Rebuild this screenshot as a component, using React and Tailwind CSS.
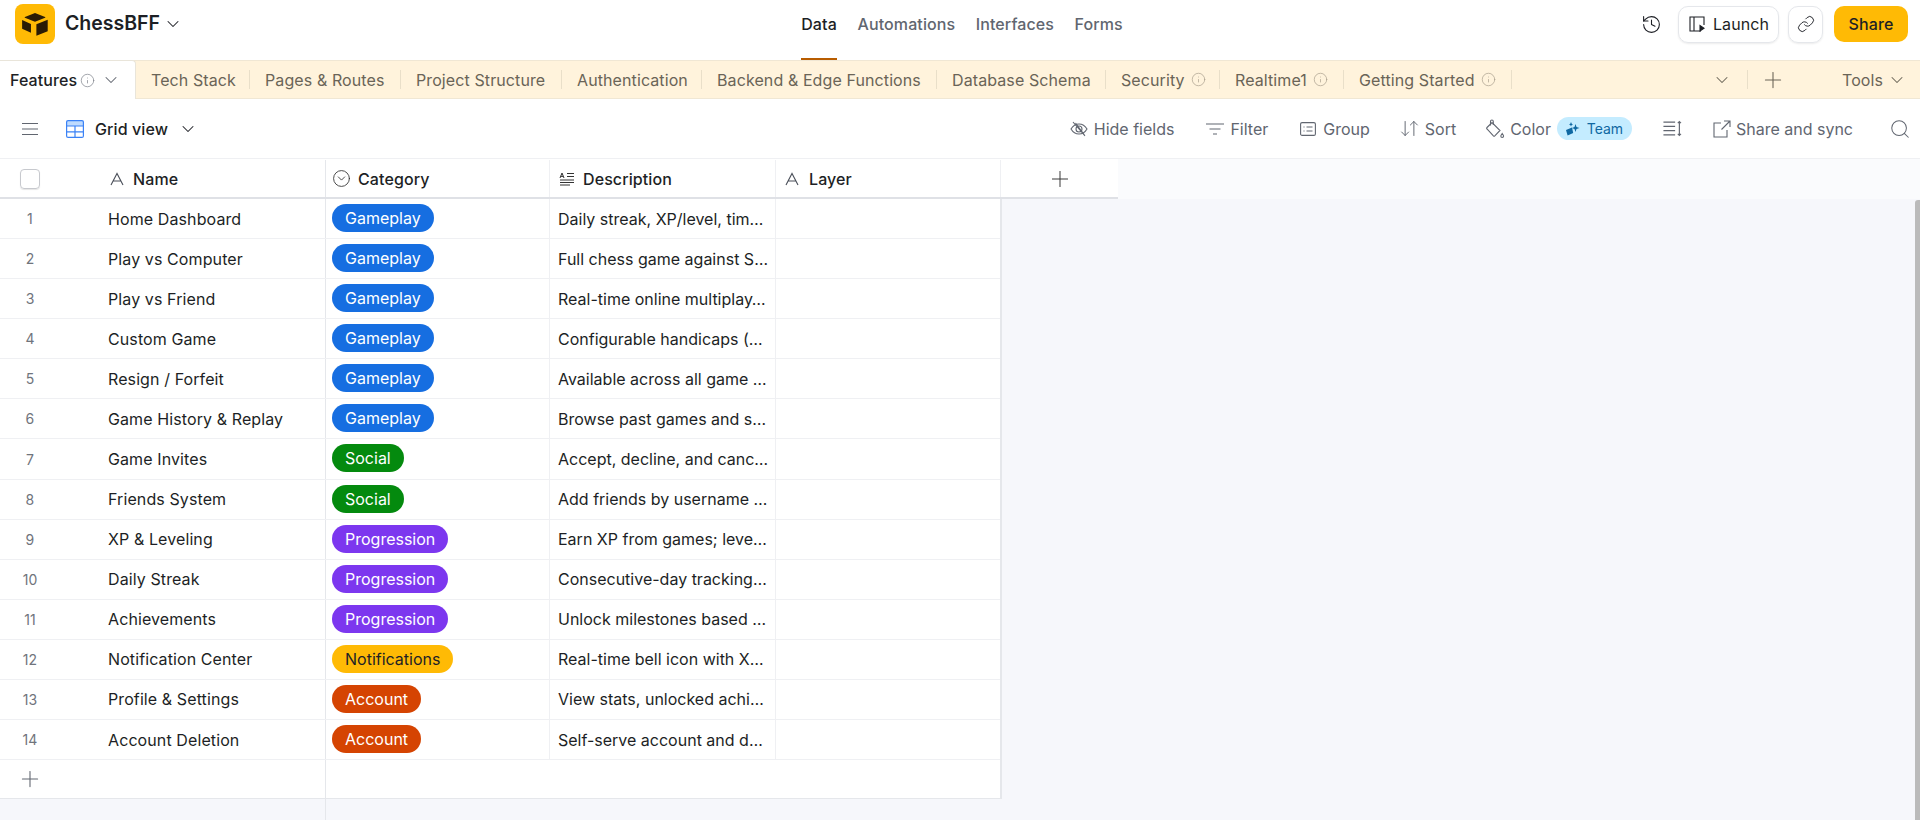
import React from "react";
import { ChevronDown, Info, Plus, Search, History, Link, CircleChevronDown, ArrowDownUp } from "lucide-react";

const AGlyph = ({ className = "" }) => (
  <svg viewBox="0 0 14 14" className={className} fill="none" stroke="currentColor" strokeWidth="1.1">
    <path d="M1 13 7 1.5 13 13M3.4 9h7.2" />
  </svg>
);
const LongText = ({ className = "" }) => (
  <svg viewBox="0 0 16 14" className={className} fill="none" stroke="currentColor" strokeWidth="1">
    <path d="M1 6 3 1l2 5M1.7 4.4h2.6M8 1.5h7M8 4.5h7M1 8h14M1 10.5h14M1 13h10" />
  </svg>
);
const Logo = () => (
  <div className="flex h-10 w-10 items-center justify-center rounded-lg bg-[#ffba05]">
    <svg viewBox="0 0 28 25" className="h-[23px] w-[28px]">
      <path d="M14 0 3 4.3c-.4.2-.4.7 0 .9l11 4.3 11-4.3c.4-.2.4-.7 0-.9z" fill="#2a1b05" />
      <path d="M0 7.6v9.4l9.6 4.4V12zM15.5 12.3v12.5l12.3-5V7.4z" fill="#2a1b05" />
    </svg>
  </div>
);
const TabInfo = () => <Info className="h-[15px] w-[15px] text-[#a89e8c]" strokeWidth={1.1} />;
const Sep = () => <div className="h-[19px] w-px bg-[#e9dfc9]" />;

const tabs = [
  { n: "Tech Stack", w: "w-[114px]" },
  { n: "Pages & Routes", w: "w-[151px]" },
  { n: "Project Structure", w: "w-[161px]" },
  { n: "Authentication", w: "w-[140px]" },
  { n: "Backend & Edge Functions", w: "w-[235px]" },
  { n: "Database Schema", w: "w-[169px]" },
  { n: "Security", i: true, w: "w-[114px]" },
  { n: "Realtime1", i: true, w: "w-[124px]" },
  { n: "Getting Started", i: true, w: "w-[168px]" },
];

const cats = {
  Gameplay: "bg-[#166ee1] text-white",
  Social: "bg-[#048a0e] text-white",
  Progression: "bg-[#7c37ef] text-white",
  Notifications: "bg-[#ffba05] text-[#1d1f25]",
  Account: "bg-[#d54402] text-white",
};
const rows = [
  ["Home Dashboard", "Gameplay", "Daily streak, XP/level, tim…"],
  ["Play vs Computer", "Gameplay", "Full chess game against S…"],
  ["Play vs Friend", "Gameplay", "Real-time online multiplay…"],
  ["Custom Game", "Gameplay", "Configurable handicaps (…"],
  ["Resign / Forfeit", "Gameplay", "Available across all game …"],
  ["Game History & Replay", "Gameplay", "Browse past games and s…"],
  ["Game Invites", "Social", "Accept, decline, and canc…"],
  ["Friends System", "Social", "Add friends by username …"],
  ["XP & Leveling", "Progression", "Earn XP from games; leve…"],
  ["Daily Streak", "Progression", "Consecutive-day tracking…"],
  ["Achievements", "Progression", "Unlock milestones based …"],
  ["Notification Center", "Notifications", "Real-time bell icon with X…"],
  ["Profile & Settings", "Account", "View stats, unlocked achi…"],
  ["Account Deletion", "Account", "Self-serve account and d…"],
];

const ToolItem = ({ icon, label, className = "" }) => (
  <div className={`flex items-center text-[#616670] ${className}`}>
    {icon}
    <span>{label}</span>
  </div>
);

export default function App() {
  return (
    <div className="flex h-[820px] w-[1920px] flex-col overflow-hidden bg-white font-['Inter',sans-serif] text-[16px] tracking-[0.1px] text-[#1d1f25]">
      {/* top bar */}
      <div className="flex h-[60px] shrink-0 items-center pb-3 pl-[15px]">
        <Logo />
        <span className="ml-[10px] text-[19.5px] font-semibold tracking-normal">ChessBFF</span>
        <ChevronDown className="ml-[3px] h-[20px] w-[20px]" strokeWidth={1.25} />
        <div className="ml-[618px] flex h-[48px] items-center gap-[20.5px] font-[450] text-[#616670]">
          <div className="relative flex h-full w-[36px] items-center justify-center text-[#1d1f25]">
            Data
            <div className="absolute bottom-[-12px] left-0 h-[2px] w-full bg-[#b85c00]" />
          </div>
          <span>Automations</span>
          <span>Interfaces</span>
          <span>Forms</span>
        </div>
        <div className="ml-auto flex items-center pr-[12px]">
          <History className="mr-[16px] h-[21px] w-[21px]" strokeWidth={1.25} />
          <div className="flex h-[37px] w-[101px] items-center justify-center gap-[7px] rounded-[10px] border border-[#e5e7eb] shadow-[0_1px_2px_rgba(0,0,0,0.08)]">
            <svg viewBox="0 0 18 18" className="h-[18px] w-[18px]" fill="none" stroke="currentColor" strokeWidth="1.1">
              <path d="M13 16H2V2h14v8M6 2v14" />
              <path d="M12 10.5v5.5l4-2.75z" fill="currentColor" />
            </svg>
            <span>Launch</span>
          </div>
          <div className="ml-[9px] flex h-[37px] w-[35px] items-center justify-center rounded-[10px] border border-[#e5e7eb] shadow-[0_1px_2px_rgba(0,0,0,0.08)]">
            <Link className="h-[18px] w-[18px]" strokeWidth={1.25} />
          </div>
          <div className="ml-[11px] flex h-[36px] w-[74px] items-center justify-center rounded-[10px] bg-[#ffba05] font-[450]">Share</div>
        </div>
      </div>

      {/* tab band */}
      <div className="flex h-[39px] shrink-0 items-center border-y border-[#f0e7d4] bg-[#fff3dc] text-[#6a6457]">
        <div className="-my-px flex h-[39px] w-[136px] items-center rounded-tr-[4px] border-r border-t border-[#e9e5da] bg-white pl-[10px] font-[450] text-[#1d1f25]">
          <span>Features</span>
          <Info className="ml-[3px] h-[15px] w-[15px] text-[#7b7f87]" strokeWidth={1.1} />
          <ChevronDown className="ml-[6px] h-[20px] w-[20px] text-[#616670]" strokeWidth={1.25} />
        </div>
        <div className="flex items-center">
          {tabs.map((t) => (
            <div key={t.n} className={`flex items-center justify-between pl-[15px] ${t.w}`}>
              <div className="flex items-center gap-[6px]">
                <span>{t.n}</span>
                {t.i && <TabInfo />}
              </div>
              <Sep />
            </div>
          ))}
        </div>
        <ChevronDown className="ml-[200px] h-[20px] w-[20px]" strokeWidth={1.25} />
        <div className="ml-[15px]"><Sep /></div>
        <Plus className="ml-[12px] h-[26px] w-[26px]" strokeWidth={1} />
        <span className="ml-[56px]">Tools</span>
        <ChevronDown className="ml-[4px] h-[20px] w-[20px]" strokeWidth={1.25} />
      </div>

      {/* toolbar */}
      <div className="flex h-[60px] shrink-0 items-center border-b border-[#eff0f3] pl-[22px] pr-[9px] tracking-normal text-[#616670]">
        <svg viewBox="0 0 16 14" className="h-[14px] w-[16px]" fill="none" stroke="currentColor" strokeWidth="1.2"><path d="M0 1.5h16M0 7h16M0 12.5h16" /></svg>
        <svg viewBox="0 0 18 18" className="ml-[28px] h-[18px] w-[18px]" fill="none">
          <rect x=".6" y=".6" width="16.8" height="5.4" fill="#bfdbfe" />
          <rect x=".6" y=".6" width="16.8" height="16.8" rx="1.5" stroke="#3b82f6" strokeWidth="1.2" />
          <path d="M.6 6h16.8M.6 11.8h16.8M9 6v11.4" stroke="#3b82f6" strokeWidth="1.2" />
        </svg>
        <span className="ml-[11px] font-[450] tracking-[0.1px] text-[#1d1f25]">Grid view</span>
        <ChevronDown className="ml-[10px] h-[20px] w-[20px] text-[#1d1f25]" strokeWidth={1.25} />
        <div className="ml-auto flex items-center">
          <ToolItem label="Hide fields" className="gap-[6px]" icon={
            <svg viewBox="0 0 18 18" className="h-[18px] w-[18px]" fill="none" stroke="currentColor" strokeWidth="1.1">
              <path d="M1 9s3-5 8-5 8 5 8 5-3 5-8 5-8-5-8-5z" /><circle cx="9" cy="9" r="3" /><path d="M3 2l12 14M5.5 3 14.5 15" />
            </svg>} />
          <ToolItem label="Filter" className="ml-[31px] gap-[5px]" icon={
            <svg viewBox="0 0 20 14" className="h-[14px] w-[20px]" fill="none" stroke="currentColor" strokeWidth="1.2"><path d="M1 2h18M4.5 7h11M8 12h4" /></svg>} />
          <ToolItem label="Group" className="ml-[32px] gap-[7px]" icon={
            <svg viewBox="0 0 16 16" className="h-[16px] w-[16px]" fill="none" stroke="currentColor" strokeWidth="1.1"><rect x=".6" y="1.6" width="14.8" height="12.8" rx="1.5" /><path d="M3.5 6h1M6.5 6h6M3.5 10h1M6.5 10h6" /></svg>} />
          <ToolItem label="Sort" className="ml-[29px] gap-[5px]" icon={<ArrowDownUp className="h-[21px] w-[21px]" strokeWidth={1.1} />} />
          <ToolItem label="Color" className="ml-[29px] gap-[5px]" icon={
            <svg viewBox="0 0 20 20" className="h-[20px] w-[20px]" fill="none" stroke="currentColor" strokeWidth="1.1">
              <path d="M2 8.5 7 3.5l8 8-5.2 5.4a1 1 0 0 1-1.4 0L2 10a1 1 0 0 1 0-1.5z" />
              <path d="M5.5 6.5V2.4a1.4 1.4 0 0 1 2.8 0V6" />
              <path d="M17.2 14.5c.9 1.2 1.4 1.9 1.4 2.5a1.4 1.4 0 0 1-2.8 0c0-.6.5-1.3 1.4-2.5z" />
            </svg>} />
          <div className="ml-[6px] flex h-[23px] w-[75px] items-center justify-center gap-[7px] rounded-full bg-[#c4ecff] text-[14px] text-[#0f68a2]">
            <svg viewBox="0 0 14 14" className="h-[14px] w-[14px]" fill="#0f68a2"><path d="M0 8l6-2.4 1.2 5.4-5.6 2.4zM8.5 5l1-3 1 3 3 .9-3 1-1 3-1-3-2.5-1zM5 0l.7 1.7L7 2.4l-1.3.6L5 4.6 4.3 3 3 2.4l1.3-.7z" /></svg>
            <span>Team</span>
          </div>
          <svg viewBox="0 0 18 16" className="ml-[31px] h-[17px] w-[20px]" fill="none" stroke="currentColor" strokeWidth="1.1"><path d="M0 2h11M0 6h11M0 10h11M0 14h11M15 1.5v13M13.5 3 15 1.5 16.5 3M13.5 13l1.5 1.5 1.5-1.5" /></svg>
          <ToolItem label="Share and sync" className="ml-[30px] gap-[5px]" icon={
            <svg viewBox="0 0 18 18" className="h-[18px] w-[18px]" fill="none" stroke="currentColor" strokeWidth="1.1"><path d="M8 3H1v14h13v-7M11 1h6v6M17 1 8.5 9.5" /></svg>} />
          <Search className="ml-[36px] h-[22px] w-[22px]" strokeWidth={1.1} />
        </div>
      </div>

      {/* grid */}
      <div className="relative flex min-h-0 flex-1 flex-col bg-[#f6f7fb]">
        {/* header */}
        <div className="flex h-[40px] shrink-0 bg-[#fafbfd]">
          <div className="flex h-full w-[1118px] border-b-2 border-[#dfe1e6] bg-white pt-[1px] font-[450]">
            <div className="flex w-[326px] items-center border-r border-[#e5e7eb]">
              <div className="ml-[20px] h-[20px] w-[20px] rounded-[4px] border border-[#c7c9ce] shadow-[0_1px_1px_rgba(0,0,0,0.1)]" />
              <AGlyph className="ml-[70px] h-[14px] w-[14px] text-[#4a4f59]" />
              <span className="ml-[9px]">Name</span>
            </div>
            <div className="flex w-[224px] items-center gap-[7px] border-r border-[#eff0f3] pl-[6px]">
              <CircleChevronDown className="h-[19px] w-[19px] text-[#333]" strokeWidth={1.1} />
              <span>Category</span>
            </div>
            <div className="flex w-[226px] items-center gap-[8px] border-r border-[#eff0f3] pl-[9px]">
              <LongText className="h-[14px] w-[16px] text-[#333]" />
              <span>Description</span>
            </div>
            <div className="flex w-[225px] items-center gap-[10px] border-r border-[#eff0f3] pl-[9px]">
              <AGlyph className="h-[14px] w-[14px] text-[#4a4f59]" />
              <span>Layer</span>
            </div>
            <div className="flex flex-1 items-center justify-center">
              <Plus className="h-[26px] w-[26px] text-[#333]" strokeWidth={0.9} />
            </div>
          </div>
        </div>

        {/* rows */}
        <div className="w-[1002px] border-r-2 border-[#e5e7eb] bg-white">
          {rows.map((r, i) => (
            <div key={i} className="flex h-[40.08px] border-b border-[#eff0f3]">
              <div className="flex w-[326px] items-center border-r border-[#e5e7eb]">
                <span className="w-[60px] text-center text-[14px] text-[#70747c]">{i + 1}</span>
                <span className="ml-[48px]">{r[0]}</span>
              </div>
              <div className="flex w-[224px] items-start border-r border-[#eff0f3] pl-[6px] pt-[5px]">
                <span className={`flex h-[28px] items-center rounded-full px-[13px] font-normal tracking-normal ${cats[r[1]]}`}>{r[1]}</span>
              </div>
              <div className="flex w-[226px] items-center overflow-hidden whitespace-nowrap border-r border-[#eff0f3] pl-[8px] tracking-normal">{r[2]}</div>
              <div className="flex-1" />
            </div>
          ))}
          <div className="flex h-[39px] border-b border-[#e5e7eb]">
            <div className="flex w-[326px] items-center border-r border-[#e5e7eb] pl-[17px]">
              <Plus className="h-[26px] w-[26px] text-[#616670]" strokeWidth={1} />
            </div>
          </div>
        </div>
        <div className="ml-[325px] w-px flex-1 bg-[#e5e7eb]" />
        <div className="absolute bottom-0 right-0 top-[41px] w-[5px] rounded-tl-[3px] bg-[#bbbbbb]" />
      </div>
    </div>
  );
}
